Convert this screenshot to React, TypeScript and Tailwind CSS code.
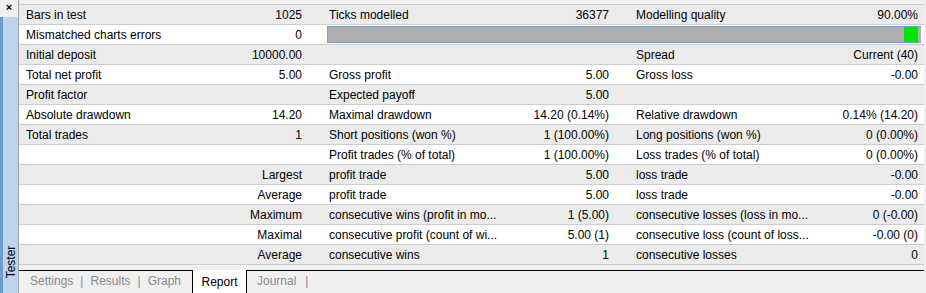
import React from 'react';

type Row = [string, string, string, string, string, string] | 'bar';

const rows: Row[] = [
  ['Bars in test', '1025', 'Ticks modelled', '36377', 'Modelling quality', '90.00%'],
  'bar',
  ['Initial deposit', '10000.00', '', '', 'Spread', 'Current (40)'],
  ['Total net profit', '5.00', 'Gross profit', '5.00', 'Gross loss', '-0.00'],
  ['Profit factor', '', 'Expected payoff', '5.00', '', ''],
  ['Absolute drawdown', '14.20', 'Maximal drawdown', '14.20 (0.14%)', 'Relative drawdown', '0.14% (14.20)'],
  ['Total trades', '1', 'Short positions (won %)', '1 (100.00%)', 'Long positions (won %)', '0 (0.00%)'],
  ['', '', 'Profit trades (% of total)', '1 (100.00%)', 'Loss trades (% of total)', '0 (0.00%)'],
  ['', 'Largest', 'profit trade', '5.00', 'loss trade', '-0.00'],
  ['', 'Average', 'profit trade', '5.00', 'loss trade', '-0.00'],
  ['', 'Maximum', 'consecutive wins (profit in mo...', '1 (5.00)', 'consecutive losses (loss in mo...', '0 (-0.00)'],
  ['', 'Maximal', 'consecutive profit (count of wi...', '5.00 (1)', 'consecutive loss (count of loss...', '-0.00 (0)'],
  ['', 'Average', 'consecutive wins', '1', 'consecutive losses', '0'],
];

const tabs = ['Settings', 'Results', 'Graph'];

function ReportRow({ row, index }: { row: Row; index: number }) {
  const bg = index % 2 === 0 ? 'bg-[#ebebeb]' : 'bg-white';
  if (row === 'bar') {
    return (
      <div className={`flex h-[20px] border-b border-[#cdcdcd] ${bg}`}>
        <div className="w-[181px] pl-[7px] pt-[1px] whitespace-nowrap leading-[19px]">Mismatched charts errors</div>
        <div className="w-[109px] pr-[7px] pt-[1px] text-right leading-[19px]">0</div>
        <div className="flex-1 flex items-center pl-[18px] pr-[3px]">
          <div className="flex h-[17px] w-full bg-[#b0b0b0] border-y border-[#6fa3d6] border-l border-l-[#6fa3d6] justify-end pr-[3px] items-center">
            <div className="w-[14px] h-[15px] bg-[#00e400]" />
          </div>
        </div>
      </div>
    );
  }
  const [l1, v1, l2, v2, l3, v3] = row;
  return (
    <div className={`flex h-[20px] pt-[1px] border-b border-[#cdcdcd] leading-[19px] ${bg}`}>
      <div className="w-[181px] pl-[7px] whitespace-nowrap">{l1}</div>
      <div className="w-[109px] pr-[7px] text-right whitespace-nowrap">{v1}</div>
      <div className="w-[211px] pl-[20px] whitespace-nowrap">{l2}</div>
      <div className="w-[96px] pr-[7px] text-right whitespace-nowrap">{v2}</div>
      <div className="w-[144px] pl-[20px] whitespace-nowrap">{l3}</div>
      <div className="flex-1 pr-[6px] text-right whitespace-nowrap">{v3}</div>
    </div>
  );
}

export default function App() {
  return (
    <div
      className="flex w-[926px] h-[293px] bg-[#f0f0f0] text-[12px] text-black overflow-hidden"
      style={{ fontFamily: '"Liberation Sans", Arial, sans-serif' }}
    >
      <div className="flex flex-col w-[19px] border-r border-[#a0a0a0]">
        <div className="h-[17px] flex items-start justify-center pt-[1px] text-[11px] font-bold leading-[12px]">
          ×
        </div>
        <div className="flex-1 flex flex-col justify-end items-center bg-[#bcd4ee] border-l-[3px] border-[#6d9bd0] pb-[10px]">
          <div className="-rotate-90 whitespace-nowrap text-[12px] leading-[12px] w-[14px] h-[42px] flex items-center justify-center">
            Tester
          </div>
        </div>
      </div>

      <div className="flex-1 flex flex-col pr-[2px]">
        <div className="h-[5px] border-b border-[#cdcdcd]" />
        <div>
          {rows.map((r, i) => (
            <ReportRow key={i} row={r} index={i} />
          ))}
        </div>
        <div className="h-[5px]" />
        <div className="flex flex-1 border-t border-black text-[#8a8a8a]">
          <div className="flex items-center pl-[11px] h-[20px]">
            {tabs.map((t, i) => (
              <React.Fragment key={t}>
                <span>{t}</span>
                {i < tabs.length - 1 && <span className="mx-[7px]">|</span>}
              </React.Fragment>
            ))}
          </div>
          <div className="-mt-px ml-[11px] w-[55px] bg-white border-x border-black flex justify-center pt-[3px] text-black">
            Report
          </div>
          <div className="flex items-center h-[20px] pl-[10px]">
            <span>Journal</span>
            <span className="ml-[9px]">|</span>
          </div>
        </div>
      </div>
    </div>
  );
}
